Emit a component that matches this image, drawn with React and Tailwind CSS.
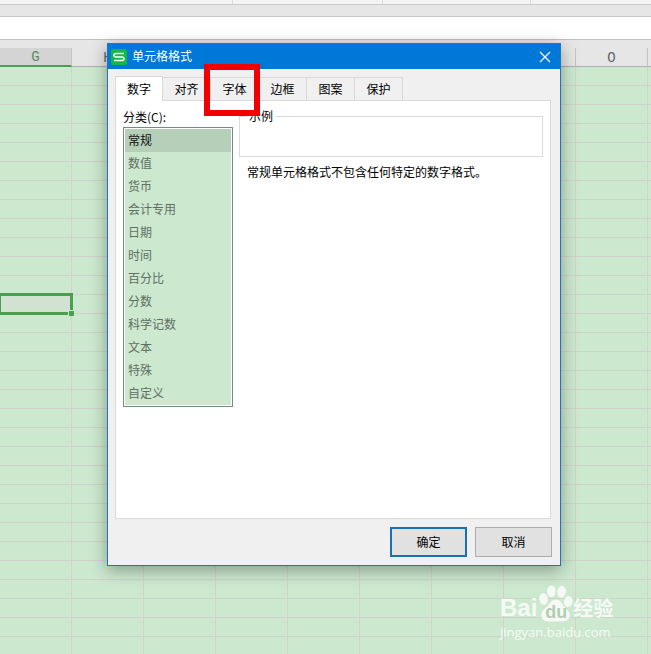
import React, { useState } from 'react';

const columns = ['G', 'H', 'I', 'J', 'K', 'L', 'M', 'N', 'O', ''];
const rows = Array.from({ length: 31 }, (_, i) => i);
const ACTIVE_ROW = 12;

const tabs = ['数字', '对齐', '字体', '边框', '图案', '保护'];

const categories = [
    '常规', '数值', '货币', '会计专用', '日期', '时间',
    '百分比', '分数', '科学记数', '文本', '特殊', '自定义',
];

function Toolbar() {
    return (
        <div>
            <div className="grid h-[5px] grid-cols-[233px_150px_148px_1fr] border-b border-[#c9c9c9] bg-[#f3f3f3]">
                <span className="border-r border-[#dcdcdc]" />
                <span className="border-r border-[#dcdcdc]" />
                <span className="border-r border-[#dcdcdc]" />
            </div>
            <div className="h-3 border-b border-[#c6c6c6] bg-[#e6e6e6]" />
            {/* formula bar */}
            <input aria-label="编辑栏" className="block h-[23px] w-full border-b border-[#c0c0c0] bg-white px-2 text-xs outline-none" />
            <div className="h-2 bg-[#e6e6e6]" />
        </div>
    );
}

function Sheet() {
    return (
        <table className="w-[720px] table-fixed border-separate border-spacing-0">
            <thead>
                <tr className="h-[19px]">
                    {columns.map((c) => (
                        <th
                            key={c}
                            className={
                                c === 'G'
                                    ? 'h-[19px] border-r border-b-2 border-r-[#c4c4c4] border-b-[#4aa04e] bg-[#d4d4d4] p-0 pt-px font-["Liberation_Mono",monospace] text-sm leading-4 font-normal text-[#5b8a61]'
                                    : 'h-[19px] border-r border-b border-r-[#c4c4c4] border-b-[#adadad] bg-[#e6e6e6] p-0 pt-0.5 font-["Liberation_Mono",monospace] text-sm leading-4 font-normal text-[#666666]'
                            }
                        >
                            {c}
                        </th>
                    ))}
                </tr>
            </thead>
            <tbody>
                {rows.map((r) => (
                    <tr key={r} className="h-[19px]">
                        {columns.map((c) => (
                            <td key={c} className="relative h-[19px] border-r border-b border-[#d1d3cb] p-0">
                                {r === ACTIVE_ROW && c === 'G' && (
                                    <div className="absolute -inset-x-0.5 -top-0.5 -bottom-0.5 z-10 border-3 border-[#4aa04e] bg-[#d1e2d0]">
                                        <span className="absolute -right-1 -bottom-1 size-1.5 border-t border-l border-[#cce8cf] bg-[#4aa04e]" />
                                    </div>
                                )}
                            </td>
                        ))}
                    </tr>
                ))}
            </tbody>
        </table>
    );
}

function WpsIcon() {
    return (
        <svg viewBox="0 0 16 16" className="size-4">
            <rect width="16" height="16" rx="2" fill="#14b748" />
            <path
                d="M13 4.5H5.2Q3 4.5 3 6.2Q3 7.9 5.2 7.9H10.8Q13 7.9 13 9.7Q13 11.5 10.8 11.5H3"
                fill="none"
                stroke="#fff"
                strokeWidth="1.5"
            />
        </svg>
    );
}

function FormatDialog() {
    const [tab, setTab] = useState('数字');
    const [category, setCategory] = useState('常规');

    return (
        <section
            role="dialog"
            aria-labelledby="dialog-title"
            className="absolute top-[43px] left-[107px] z-20 w-[454px] border border-[#1d76b8] bg-[#f0f0f0] text-xs text-black shadow-[0_4px_16px_rgba(0,0,0,0.35)]"
        >
            <header className="flex h-[25px] items-center gap-[5px] bg-[#0078d7] pr-[7px] pl-[3px] text-white">
                <WpsIcon />
                <h1 id="dialog-title" className="pb-0.5">单元格格式</h1>
                <button type="button" aria-label="关闭" className="ml-auto size-4">
                    <svg viewBox="0 0 16 16" className="size-4">
                        <path d="M3 3L13 13M13 3L3 13" stroke="#fff" strokeWidth="1.2" />
                    </svg>
                </button>
            </header>

            <div className="pt-[7px] pr-[9px] pb-2 pl-[7px]">
                <div role="tablist" className="flex items-end">
                    {tabs.map((t) => (
                        <div key={t} className="relative">
                            <button
                                type="button"
                                role="tab"
                                aria-selected={t === tab}
                                onClick={() => setTab(t)}
                                className={
                                    t === tab
                                        ? 'relative z-10 -mb-px block h-[25px] w-12 border border-b-0 border-[#d9d9d9] bg-white'
                                        : 'block h-[23px] w-12 border-t border-r border-[#d9d9d9] bg-[#f0f0f0]'
                                }
                            >
                                {t}
                            </button>
                            {/* red marker around the font tab */}
                            {t === '字体' && (
                                <span className="pointer-events-none absolute -top-[13px] -left-[7px] z-20 h-[52px] w-14 border-6 border-[#f20000]" />
                            )}
                        </div>
                    ))}
                </div>

                <div role="tabpanel" className="flex min-h-[419px] gap-1.5 border border-[#d9d9d9] bg-white px-[7px] pt-[7px]">
                    <div className="w-[110px]">
                        <label htmlFor="category" className="block h-[19px] leading-[18px]">分类(C):</label>
                        <select
                            id="category"
                            size={12}
                            value={category}
                            onChange={(e) => setCategory(e.target.value)}
                            className="block h-[280px] w-full appearance-none overflow-hidden rounded-none border border-[#738c84] bg-[#cce8cf] p-px text-[#5f6f62] outline-1 -outline-offset-2 outline-white"
                        >
                            {categories.map((c) => (
                                <option
                                    key={c}
                                    value={c}
                                    className="h-[23px] min-h-0 px-[3px] pt-0.5 pb-0 checked:bg-linear-to-r checked:from-[#b5cfb8] checked:to-[#b5cfb8]"
                                >
                                    {c}
                                </option>
                            ))}
                        </select>
                    </div>

                    <div className="flex-1">
                        <fieldset className="h-[49px] border border-[#d9d9d9] px-[7px]">
                            <legend className="px-0.5 leading-4">示例</legend>
                        </fieldset>
                        <p className="mt-[7px] pl-2 leading-4">常规单元格格式不包含任何特定的数字格式。</p>
                    </div>
                </div>

                <footer className="-mr-px mt-2 flex justify-end gap-2">
                    <button type="button" className="h-[30px] w-[77px] border-2 border-[#1672b4] bg-[#e1e1e1]">确定</button>
                    <button type="button" className="h-[30px] w-[77px] border border-[#adadad] bg-[#e1e1e1]">取消</button>
                </footer>
            </div>
        </section>
    );
}

function Watermark() {
    return (
        <div className="pointer-events-none absolute top-[585px] left-[500px] z-20 w-[120px] text-white/80">
            <div className="flex h-[37px] items-end">
                <span className="font-['Liberation_Sans',sans-serif] text-2xl leading-7 font-bold">Bai</span>
                <span className="relative ml-0.5 h-[37px] w-[34px]">
                    <svg viewBox="0 0 34 37" className="h-[37px] w-[34px]" fill="currentColor">
                        <ellipse cx="4.6" cy="14" rx="4.3" ry="5.8" transform="rotate(-8 4.6 14)" />
                        <ellipse cx="12.4" cy="6.2" rx="4.3" ry="6" />
                        <ellipse cx="22.6" cy="6.8" rx="4.3" ry="6" transform="rotate(10 22.6 6.8)" />
                        <ellipse cx="29.3" cy="16.5" rx="4.3" ry="5.6" transform="rotate(12 29.3 16.5)" />
                        <path d="M17 14.5C12 14.500 11 19 7 22.500C3 26 2 28 2.500 31.500C4 37 9 36.500 16 36.500C23 36.500 28 37 30.500 32.500C32 28 29 26 26 22.500C22.500 19 22 14.500 17 14.500Z" />
                    </svg>
                    <span className="absolute inset-x-0 bottom-0 text-center font-['Liberation_Sans',sans-serif] text-lg leading-5 font-bold text-[#b4ccb6]">du</span>
                </span>
                <span className="text-xl leading-7 font-bold">经验</span>
            </div>
            <div className="font-['Open_Sans',sans-serif] text-[13px] leading-5">jingyan.baidu.com</div>
        </div>
    );
}

export default function App() {
    return (
        <main className='relative min-h-screen overflow-hidden bg-[#cce8cf] font-["Noto_Sans_CJK_SC",sans-serif]'>
            <Toolbar />
            {/* keep the sheet from running past the window */}
            <div className="h-[calc(100vh-48px)] overflow-hidden">
                <Sheet />
            </div>
            <FormatDialog />
            <Watermark />
        </main>
    );
}
